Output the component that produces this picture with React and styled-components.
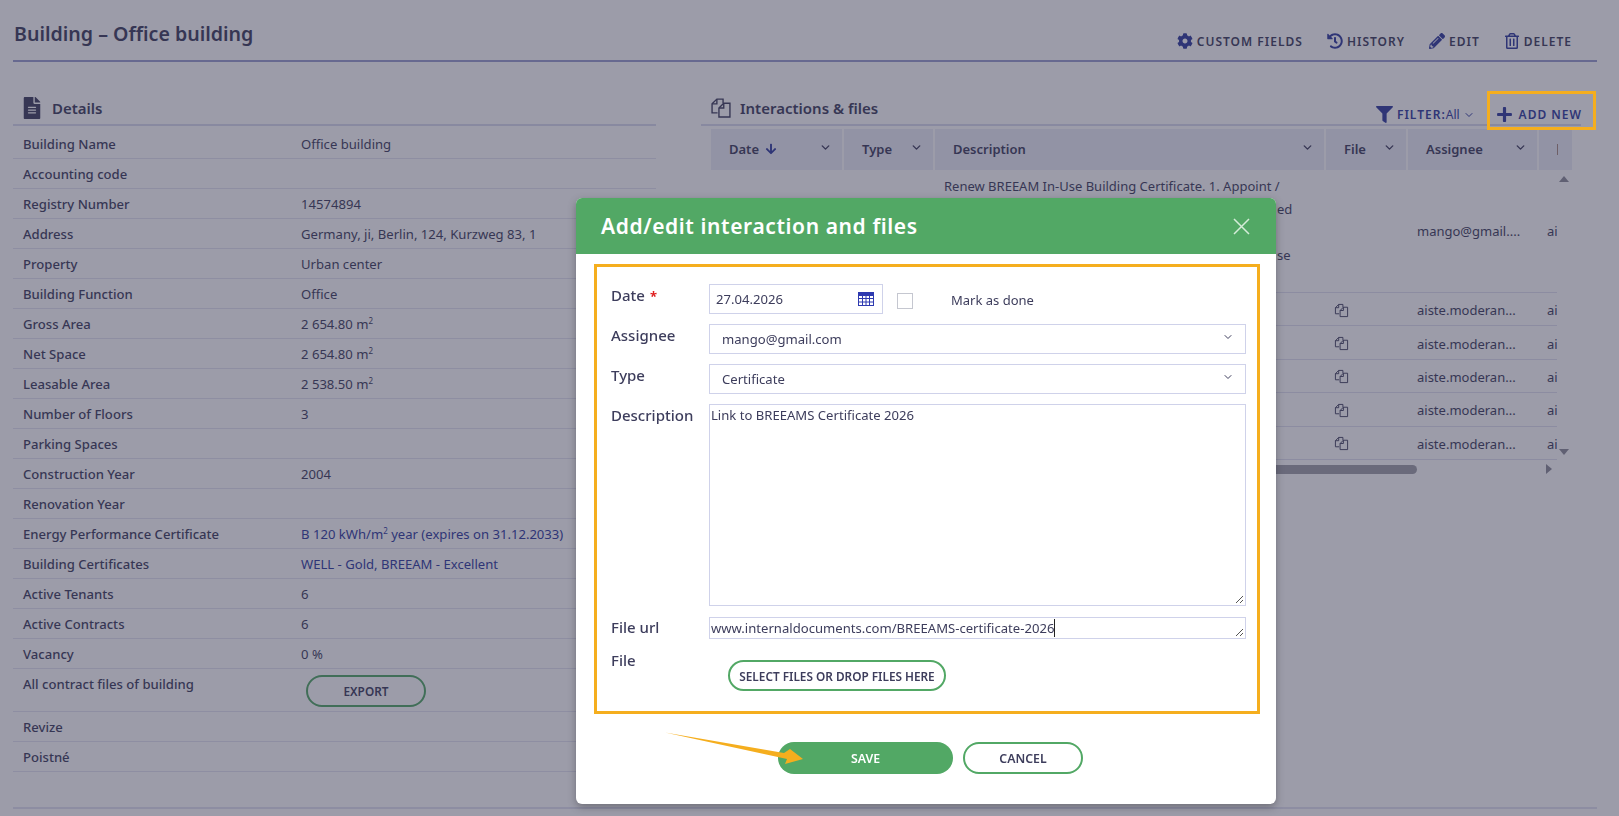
import styled, { createGlobalStyle } from 'styled-components'
import { FaCog, FaHistory, FaPencilAlt, FaRegTrashAlt, FaFilter, FaPlus, FaFileAlt, FaArrowDown } from 'react-icons/fa'
import { FiChevronDown } from 'react-icons/fi'

const ink = '#3d3d5c'
const blue = '#2e3a9e'
const green = '#52a865'
const orange = '#f5ae1e'
const field = '#cfd2ea'

const GlobalStyle = createGlobalStyle`
  html, body {
    margin: 0;
    height: 100%;
    background: #fff;
    overflow: hidden;
    font-family: 'Noto Sans', 'Open Sans', sans-serif;
    color: ${ink};
  }
`

const Page = styled.div`
  width: 1619px;
  height: 816px;
  box-sizing: border-box;
  padding: 0 22px 0 13px;
  overflow: hidden;
`

const TopBar = styled.header`
  display: flex;
  justify-content: space-between;
  height: 62px;
  box-sizing: border-box;
  border-bottom: 2px solid #9a9dd0;
`

const Title = styled.h1`
  margin: 20px 0 0 1px;
  font-size: 19.6px;
  line-height: 28px;
  font-weight: 600;
`

const Actions = styled.nav`
  display: flex;
  gap: 24px;
  padding: 32px 25px 0 0;
`

const Action = styled.a`
  display: flex;
  align-items: center;
  height: 18px;
  gap: 4px;
  font-size: 12px;
  font-weight: 600;
  letter-spacing: 1px;
  color: ${ink};
  svg { color: ${blue}; font-size: 16px; flex: none; }
`

const Columns = styled.main`
  display: flex;
  padding-top: 33px;
`

const Left = styled.section`
  width: 643px;
  flex: none;
`

const Right = styled.section`
  width: 880px;
  margin-left: 45px;
  flex: none;
`

const SectionHead = styled.div`
  display: flex;
  align-items: center;
  height: 31px;
  box-sizing: border-box;
  border-bottom: 2px solid #d9dbee;
  padding: 0 0 4px ${p => p.$pad}px;
  gap: ${p => p.$gap}px;
  font-size: 15px;
  font-weight: 600;
  position: relative;
`

const RowList = styled.div`
  margin-top: 3px;
`

const Row = styled.div`
  display: flex;
  height: ${p => p.$tall ? 43 : 30}px;
  box-sizing: border-box;
  border-bottom: 1px solid #e4e5f2;
  padding: 6px 10px 0;
  font-size: 13.1px;
  line-height: 18px;
`

const RowLabel = styled.div`
  width: 278px;
  flex: none;
  font-weight: 500;
`

const RowValue = styled.div`
  color: ${p => p.$link ? blue : ink};
  sup { font-size: 8px; line-height: 0; }
`

const OutlineButton = styled.button`
  display: block;
  box-sizing: border-box;
  padding: 0;
  width: ${p => p.$w}px;
  height: ${p => p.$h}px;
  margin: ${p => p.$margin ?? 0};
  border: 2px solid ${green};
  border-radius: 16px;
  background: #fff;
  color: ${ink};
  font-family: inherit;
  font-size: ${p => p.$fs ?? 11.8}px;
  font-weight: 600;
`

const Toolbar = styled.div`
  position: absolute;
  right: -1px;
  bottom: 1px;
  display: flex;
  align-items: center;
  font-size: 12px;
  font-weight: 600;
  letter-spacing: 1px;
  color: ${blue};
`

const FilterBox = styled.span`
  display: flex;
  align-items: center;
  gap: 6px;
  margin-right: 21px;
  svg { flex: none; margin-left: -3px; }
  svg:first-child { font-size: 17px; margin: 0 -2px 0 0; }
  em { font-style: normal; font-weight: 400; letter-spacing: 0; margin-left: -6px; }
`

const AddNew = styled.span`
  display: flex;
  align-items: center;
  gap: 6px;
  svg { font-size: 17px; flex: none; }
`

const AddNewFrame = styled.div`
  position: absolute;
  z-index: 20;
  left: 786px;
  top: -4px;
  width: 109px;
  height: 39px;
  box-sizing: border-box;
  border: 3px solid ${orange};
`

const Grid = styled.div`
  position: relative;
  margin: 3px 0 0 10px;
  width: 861px;
  height: 345px;
  overflow: hidden;
`

const HeaderRow = styled.div`
  display: flex;
  gap: 2px;
  height: 41px;
`

const HeadCell = styled.div`
  flex: none;
  box-sizing: border-box;
  width: ${p => p.$w}px;
  display: flex;
  align-items: center;
  padding: 0 10px 1px 18px;
  background: #ecedf7;
  font-size: 13px;
  font-weight: 600;
  span { flex: 1; display: flex; align-items: center; }
  svg.chev { font-size: 13px; stroke-width: 2.6; margin-bottom: 3px; }
`

const SortIcon = styled(FaArrowDown)`
  margin-left: 6px;
  color: ${blue};
  font-size: 12px;
`

const ResizeMark = styled.i`
  width: 1px;
  height: 11px;
  background: #a88a80;
`

const Body = styled.div`
  width: 846px;
  overflow: hidden;
`

const DataRow = styled.div`
  display: flex;
  align-items: center;
  height: ${p => p.$h}px;
  box-sizing: border-box;
  padding-top: ${p => p.$top ?? 0}px;
  border-bottom: 1px solid #e0e1f0;
  font-size: 13px;
  white-space: nowrap;
`

const DescCell = styled.div`
  width: 706px;
  flex: none;
  box-sizing: border-box;
  padding: 5px 0 0 233px;
  line-height: 23px;
  align-self: flex-start;
`

const DescLine = styled.div`
  height: 23px;
  padding-left: ${p => p.$indent ?? 0}px;
`

const FileCell = styled.div`
  width: 706px;
  flex: none;
  padding-left: 623px;
  box-sizing: border-box;
  display: flex;
`

const AssigneeCell = styled.div`
  width: 130px;
  flex: none;
`

const Clip = styled.div`
  flex: none;
`

const HScroll = styled.div`
  position: absolute;
  left: 0;
  top: 336px;
  width: 706px;
  height: 9px;
  border-radius: 5px;
  background: #a0a0a8;
`

const ScrollArrow = styled.div`
  position: absolute;
  width: 0;
  height: 0;
  left: ${p => p.$x}px;
  top: ${p => p.$y}px;
  border: 5px solid transparent;
  ${p => p.$dir === 'up' && `border-bottom: 6px solid #8c8c98; border-top: 0;`}
  ${p => p.$dir === 'down' && `border-top: 6px solid #8c8c98; border-bottom: 0;`}
  ${p => p.$dir === 'right' && `border-left: 6px solid #8c8c98; border-right: 0;`}
`

const BottomRule = styled.div`
  margin-top: 35px;
  border-bottom: 2px solid #e2e3f1;
  width: 1584px;
`

const Overlay = styled.div`
  position: fixed;
  z-index: 10;
  inset: 0;
  background: rgba(49, 49, 75, 0.48);
`

const Modal = styled.div`
  position: fixed;
  z-index: 30;
  left: 576px;
  top: 198px;
  width: 700px;
  height: 606px;
  background: #fff;
  border-radius: 6px;
  box-shadow: 0 3px 8px rgba(0, 0, 0, 0.3);
  overflow: hidden;
`

const ModalHead = styled.div`
  display: flex;
  align-items: center;
  justify-content: space-between;
  height: 56px;
  padding: 0 26px 0 25px;
  background: ${green};
  color: #fff;
  font-size: 21px;
  font-weight: 600;
  letter-spacing: 0.6px;
`

const FormFrame = styled.div`
  margin: 10px 16px 0 18px;
  height: 450px;
  box-sizing: border-box;
  border: 3px solid ${orange};
  padding: 17px 11px 0 14px;
  display: flex;
  flex-direction: column;
`

const FormRow = styled.div`
  display: flex;
  margin-bottom: ${p => p.$gap ?? 10}px;
`

const FormLabel = styled.label`
  width: 98px;
  flex: none;
  font-size: 15px;
  font-weight: 500;
  line-height: 20px;
  padding-top: ${p => p.$top ?? 1}px;
  b { color: #e02020; font-size: 13px; font-weight: 700; margin-left: 5px; }
`

const Input = styled.div`
  box-sizing: border-box;
  width: ${p => p.$w ? `${p.$w}px` : '100%'};
  height: ${p => p.$h ?? 30}px;
  border: 1px solid ${field};
  display: flex;
  align-items: ${p => p.$top ? 'flex-start' : 'center'};
  justify-content: space-between;
  position: relative;
  padding: ${p => p.$pad ?? '0 8px 0 6px'};
  font-size: 13.1px;
  line-height: 18px;
  svg.chev { font-size: 12px; color: ${ink}; margin: 0 11px 4px 0; }
`

const Check = styled.span`
  width: 16px;
  height: 16px;
  box-sizing: border-box;
  border: 1px solid #c5c7d0;
  margin: 9px 38px 0 14px;
  flex: none;
`

const CheckText = styled.span`
  font-size: 13px;
  line-height: 18px;
  padding-top: 7px;
`

const Caret = styled.i`
  display: inline-block;
  width: 1px;
  height: 18px;
  vertical-align: top;
  background: #222;
`

const Grip = styled.svg`
  position: absolute;
  right: 1px;
  bottom: 1px;
`

const Footer = styled.div`
  display: flex;
  gap: 10px;
  padding: 28px 0 0 202px;
`

const SaveButton = styled.button`
  width: 175px;
  height: 32px;
  border: 0;
  border-radius: 16px;
  background: ${green};
  color: #fff;
  font-family: inherit;
  font-size: 12.3px;
  font-weight: 600;
`

const Arrow = styled.svg`
  position: absolute;
  left: 86px;
  top: 530px;
`

const PagesIcon = ({ size = 16 }) => (
  <svg width={size} height={size} viewBox="0 0 16 16" fill="none" stroke="currentColor" strokeWidth="1">
    <path d="M5.5 11.5H1.5V5L5 1.5H9.5V4.5" />
    <path d="M5 1.5V5H1.5" />
    <path d="M6.5 14.5V8L10 4.5H14.5V14.5Z" />
    <path d="M10 4.5V8H6.5" />
  </svg>
)

const CalendarIcon = () => (
  <svg width="16" height="14" viewBox="0 0 16 14" fill="none" stroke="#2e3ab0" strokeWidth="1">
    <rect x="0.5" y="0.5" width="15" height="13" />
    <rect x="0.5" y="0.5" width="15" height="3" fill="#2e3ab0" />
    <path d="M4.5 3V14M8 3V14M11.5 3V14M0 6.5H16M0 10H16" />
  </svg>
)

const ResizeGrip = () => (
  <Grip width="9" height="9" viewBox="0 0 9 9" stroke="#555" strokeWidth="1">
    <path d="M1 8L8 1M5 8L8 5" />
  </Grip>
)

const details = [
  ['Building Name', 'Office building'],
  ['Accounting code', ''],
  ['Registry Number', '14574894'],
  ['Address', 'Germany, ji, Berlin, 124, Kurzweg 83, 1'],
  ['Property', 'Urban center'],
  ['Building Function', 'Office'],
  ['Gross Area', <>2 654.80 m<sup>2</sup></>],
  ['Net Space', <>2 654.80 m<sup>2</sup></>],
  ['Leasable Area', <>2 538.50 m<sup>2</sup></>],
  ['Number of Floors', '3'],
  ['Parking Spaces', ''],
  ['Construction Year', '2004'],
  ['Renovation Year', ''],
  ['Energy Performance Certificate', <>B 120 kWh/m<sup>2</sup> year (expires on 31.12.2033)</>, true],
  ['Building Certificates', 'WELL - Gold, BREEAM - Excellent', true],
  ['Active Tenants', '6'],
  ['Active Contracts', '6'],
  ['Vacancy', '0 %']
]

const columns = [
  { name: 'Date', w: 131, sort: true },
  { name: 'Type', w: 89 },
  { name: 'Description', w: 389 },
  { name: 'File', w: 80 },
  { name: 'Assignee', w: 129 },
  { name: '', w: 34 }
]

export default function App() {
  return (
    <>
      <GlobalStyle />
      <Page>
        <TopBar>
          <Title>Building – Office building</Title>
          <Actions>
            <Action><FaCog />CUSTOM FIELDS</Action>
            <Action><FaHistory />HISTORY</Action>
            <Action><FaPencilAlt />EDIT</Action>
            <Action><FaRegTrashAlt />DELETE</Action>
          </Actions>
        </TopBar>
        <Columns>
          <Left>
            <SectionHead $pad={8} $gap={9}><FaFileAlt size={22} />Details</SectionHead>
            <RowList>
              {details.map(([label, value, link]) => (
                <Row key={label}>
                  <RowLabel>{label}</RowLabel>
                  <RowValue $link={link}>{value}</RowValue>
                </Row>
              ))}
              <Row $tall>
                <RowLabel>All contract files of building</RowLabel>
                <OutlineButton $w={120} $h={32} $margin="0 0 0 5px">EXPORT</OutlineButton>
              </Row>
              <Row><RowLabel>Revize</RowLabel></Row>
              <Row><RowLabel>Poistné</RowLabel></Row>
            </RowList>
          </Left>
          <Right>
            <SectionHead $pad={9} $gap={8}>
              <PagesIcon size={22} />
              Interactions &amp; files
              <Toolbar>
                <FilterBox><FaFilter />FILTER:<em>All</em><FiChevronDown size={12} /></FilterBox>
                <AddNew><FaPlus />ADD NEW</AddNew>
              </Toolbar>
              <AddNewFrame />
            </SectionHead>
            <Grid>
              <HeaderRow>
                {columns.map(c => (
                  <HeadCell key={c.name} $w={c.w}>
                    <span>{c.name}{c.sort && <SortIcon />}{!c.name && <ResizeMark />}</span>
                    {c.name && <FiChevronDown className="chev" />}
                  </HeadCell>
                ))}
              </HeaderRow>
              <Body>
                <DataRow $h={123}>
                  <DescCell>
                    <DescLine>Renew BREEAM In-Use Building Certificate. 1. Appoint /</DescLine>
                    <DescLine $indent={333}>ed</DescLine>
                    <DescLine />
                    <DescLine $indent={333}>se</DescLine>
                  </DescCell>
                  <AssigneeCell>mango@gmail....</AssigneeCell>
                  <Clip>ai</Clip>
                </DataRow>
                {[0, 1, 2, 3, 4].map(i => (
                  <DataRow key={i} $h={33.4} $top={2}>
                    <FileCell><PagesIcon size={15} /></FileCell>
                    <AssigneeCell>aiste.moderan...</AssigneeCell>
                    <Clip>ai</Clip>
                  </DataRow>
                ))}
              </Body>
              <ScrollArrow $dir="up" $x={848} $y={47} />
              <ScrollArrow $dir="down" $x={848} $y={320} />
              <HScroll />
              <ScrollArrow $dir="right" $x={835} $y={335} />
            </Grid>
          </Right>
        </Columns>
        <BottomRule />
      </Page>
      <Overlay />
      <Modal>
        <ModalHead>
          Add/edit interaction and files
          <svg width="17" height="17" viewBox="0 0 17 17" stroke="#d5ecd9" strokeWidth="1.5"><path d="M1 1L16 16M16 1L1 16" /></svg>
        </ModalHead>
        <FormFrame>
          <FormRow>
            <FormLabel>Date<b>*</b></FormLabel>
            <Input $w={174}>27.04.2026<CalendarIcon /></Input>
            <Check />
            <CheckText>Mark as done</CheckText>
          </FormRow>
          <FormRow>
            <FormLabel>Assignee</FormLabel>
            <Input $pad="0 0 0 12px">mango@gmail.com<FiChevronDown className="chev" /></Input>
          </FormRow>
          <FormRow>
            <FormLabel>Type</FormLabel>
            <Input $pad="0 0 0 12px">Certificate<FiChevronDown className="chev" /></Input>
          </FormRow>
          <FormRow $gap={11}>
            <FormLabel>Description</FormLabel>
            <Input $h={202} $top $pad="1px">Link to BREEAMS Certificate 2026<ResizeGrip /></Input>
          </FormRow>
          <FormRow $gap={9}>
            <FormLabel $top={0}>File url</FormLabel>
            <Input $h={22} $pad="1px" $top><span>www.internaldocuments.com/BREEAMS-certificate-2026<Caret /></span><ResizeGrip /></Input>
          </FormRow>
          <FormRow>
            <FormLabel $top={2}>File</FormLabel>
            <OutlineButton $w={218} $h={31} $margin="12px 0 0 19px">SELECT FILES OR DROP FILES HERE</OutlineButton>
          </FormRow>
        </FormFrame>
        <Footer>
          <SaveButton>SAVE</SaveButton>
          <OutlineButton $w={120} $h={32} $fs={12.3}>CANCEL</OutlineButton>
        </Footer>
        <Arrow width="145" height="40" viewBox="0 0 145 40">
          <path d="M3 4.5L122 25L128 21L141 31L123 36L125 31Z" fill={orange} />
        </Arrow>
      </Modal>
    </>
  )
}
